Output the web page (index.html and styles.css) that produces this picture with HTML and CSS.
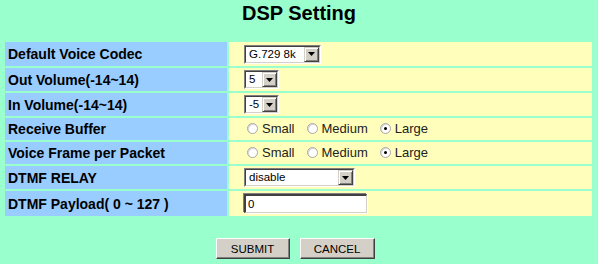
FILE: index.html
```html
<!DOCTYPE html>
<html>
<head>
<meta charset="utf-8">
<title>DSP Setting</title>
<link rel="stylesheet" href="styles.css">
</head>
<body>
<h1 class="title">DSP Setting</h1>
<form class="form">
<table class="grid">
  <tr class="r1">
    <td class="lbl">Default Voice Codec</td>
    <td class="val">
      <span class="sel w-codec"><select><option>G.729 8k</option></select><span class="arrow"><svg width="7" height="4" viewBox="0 0 7 4"><path d="M0 0h7L3.5 4z" fill="#000"/></svg></span></span>
    </td>
  </tr>
  <tr class="r2">
    <td class="lbl">Out Volume(-14~14)</td>
    <td class="val">
      <span class="sel w-vol"><select><option>5</option></select><span class="arrow"><svg width="7" height="4" viewBox="0 0 7 4"><path d="M0 0h7L3.5 4z" fill="#000"/></svg></span></span>
    </td>
  </tr>
  <tr class="r3">
    <td class="lbl">In Volume(-14~14)</td>
    <td class="val">
      <span class="sel w-vol"><select><option>-5</option></select><span class="arrow"><svg width="7" height="4" viewBox="0 0 7 4"><path d="M0 0h7L3.5 4z" fill="#000"/></svg></span></span>
    </td>
  </tr>
  <tr class="r4">
    <td class="lbl">Receive Buffer</td>
    <td class="val">
      <span class="radios">
        <label class="opt"><input type="radio" name="rb">Small</label>
        <label class="opt"><input type="radio" name="rb">Medium</label>
        <label class="opt"><input type="radio" name="rb" checked>Large</label>
      </span>
    </td>
  </tr>
  <tr class="r5">
    <td class="lbl">Voice Frame per Packet</td>
    <td class="val">
      <span class="radios">
        <label class="opt"><input type="radio" name="vf">Small</label>
        <label class="opt"><input type="radio" name="vf">Medium</label>
        <label class="opt"><input type="radio" name="vf" checked>Large</label>
      </span>
    </td>
  </tr>
  <tr class="r6">
    <td class="lbl">DTMF RELAY</td>
    <td class="val">
      <span class="sel w-relay"><select><option>disable</option></select><span class="arrow"><svg width="7" height="4" viewBox="0 0 7 4"><path d="M0 0h7L3.5 4z" fill="#000"/></svg></span></span>
    </td>
  </tr>
  <tr class="r7">
    <td class="lbl">DTMF Payload( 0 ~ 127 )</td>
    <td class="val">
      <input class="txt" type="text" value="0">
    </td>
  </tr>
</table>
<div class="buttons">
  <button type="button" class="btn btn-submit">SUBMIT</button>
  <button type="button" class="btn btn-cancel">CANCEL</button>
</div>
</form>
</body>
</html>
```
FILE: styles.css
```css
html, body {
  margin: 0;
  padding: 0;
}
body {
  background: #99ffcc;
  font-family: "Liberation Sans", Arial, sans-serif;
  color: #000;
  width: 598px;
  height: 264px;
  overflow: hidden;
}
.title {
  margin: 1px 0 0 0;
  font-size: 20px;
  line-height: 24px;
  font-weight: bold;
  text-align: center;
}
.form {
  margin: 0;
}
.grid {
  margin: 15px 0 0 3px;
  border-collapse: separate;
  border-spacing: 2px;
  width: 591px;
}
.grid td {
  padding: 0;
  vertical-align: middle;
}
.lbl {
  background: #99ccff;
  width: 222px;
  font-weight: bold;
  font-size: 14px;
  padding-left: 3px !important;
  box-sizing: border-box;
  white-space: nowrap;
}
.val {
  background: #ffffbb;
  padding-left: 15px !important;
  font-size: 13px;
}
.r1 td { height: 24px; }
.r2 td { height: 23px; }
.r3 td { height: 23px; }
.r4 td { height: 22px; }
.r5 td { height: 22px; }
.r6 td { height: 23px; }
.r7 td { height: 25px; }

.sel {
  position: relative;
  display: inline-block;
  vertical-align: middle;
  height: 19px;
  box-sizing: border-box;
  border-top: 1px solid #808080;
  border-left: 1px solid #808080;
  border-right: 1px solid #ffffff;
  border-bottom: 1px solid #ffffff;
  background: #fff;
}
.sel select {
  -webkit-appearance: none;
  appearance: none;
  display: block;
  box-sizing: border-box;
  width: 100%;
  height: 17px;
  margin: 0;
  padding: 0 0 0 3px;
  border-top: 1px solid #404040;
  border-left: 1px solid #404040;
  border-right: 1px solid #d4d0c8;
  border-bottom: 1px solid #d4d0c8;
  background: #fff;
  font-family: "Liberation Sans", Arial, sans-serif;
  font-size: 11.5px;
  color: #000;
  line-height: 15px;
  border-radius: 0;
  outline: none;
}
.sel .arrow {
  position: absolute;
  top: 1px;
  right: 1px;
  width: 15px;
  height: 15px;
  box-sizing: border-box;
  background: #d4d0c8;
  border-top: 1px solid #d4d0c8;
  border-left: 1px solid #d4d0c8;
  border-right: 1px solid #404040;
  border-bottom: 1px solid #404040;
  box-shadow: inset 1px 1px 0 #ffffff, inset -1px -1px 0 #808080;
  display: flex;
  align-items: center;
  justify-content: center;
}
.sel .arrow svg {
  display: block;
}
.w-codec { width: 77px; }
.w-vol { width: 35px; }
.w-relay { width: 111px; }

.radios {
  display: inline-flex;
  align-items: center;
  gap: 12px;
  margin-left: 3px;
}
.opt {
  display: inline-flex;
  align-items: center;
  gap: 4px;
  font-size: 13px;
  color: #222;
}
.opt input {
  -webkit-appearance: none;
  appearance: none;
  width: 11px;
  height: 11px;
  margin: 0;
  border-radius: 50%;
  border: 1px solid #a8a8a8;
  background: #fff;
  box-sizing: border-box;
  position: relative;
  box-shadow: inset 1px 1px 0 #d8d8d8;
}
.opt input:checked::after {
  content: "";
  position: absolute;
  left: 3px;
  top: 3px;
  width: 3px;
  height: 3px;
  border-radius: 50%;
  background: #000;
}

.txt {
  display: block;
  box-sizing: border-box;
  width: 123px;
  height: 19px;
  margin: 0;
  padding: 0 0 0 2px;
  border-top: 2px solid #404040;
  border-left: 2px solid #404040;
  border-right: 1px solid #d4d0c8;
  border-bottom: 1px solid #d4d0c8;
  box-shadow: 1px 1px 0 #fff, -1px -1px 0 #808080;
  background: #fff;
  font-family: "Liberation Sans", Arial, sans-serif;
  font-size: 11.5px;
  color: #000;
  outline: none;
}

.buttons {
  display: flex;
  justify-content: center;
  gap: 10px;
  margin-top: 20px;
  padding-right: 8px;
}
.btn {
  box-sizing: border-box;
  height: 21px;
  padding: 0;
  background: #d4d0c8;
  border-top: 1px solid #ffffff;
  border-left: 1px solid #ffffff;
  border-right: 1px solid #404040;
  border-bottom: 1px solid #404040;
  box-shadow: inset -1px -1px 0 #808080;
  font-family: "Liberation Sans", Arial, sans-serif;
  font-size: 11.5px;
  color: #000;
  border-radius: 0;
}
.btn-submit { width: 74px; }
.btn-cancel { width: 75px; }
```
